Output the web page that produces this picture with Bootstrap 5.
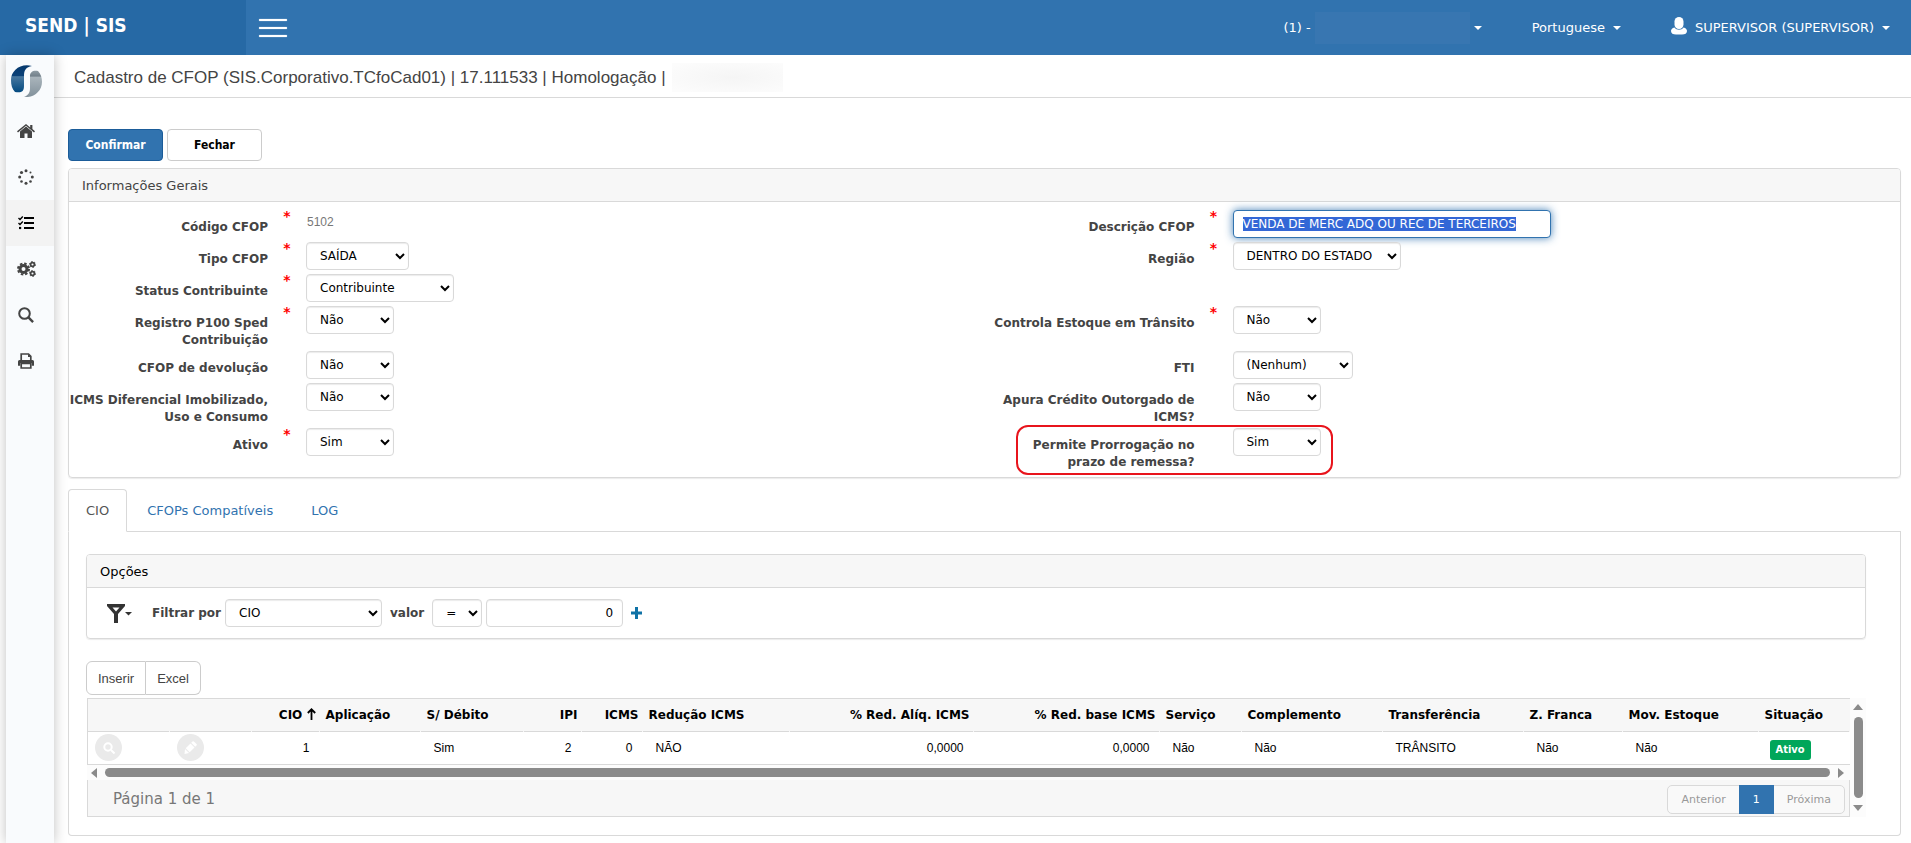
<!DOCTYPE html>
<html lang="pt-BR">
<head>
<meta charset="utf-8">
<meta name="viewport" content="width=device-width, initial-scale=1">
<title>SEND | SIS - Cadastro de CFOP</title>
<link href="https://cdn.jsdelivr.net/npm/bootstrap@5.3.0/dist/css/bootstrap.min.css" rel="stylesheet">
<style>
:root { --sis-blue: #3173af; --sis-brand: #2669a5; --sis-line: #d9d9d9; --sis-soft: #f7f7f7; }
body { font-family: "DejaVu Sans", Verdana, sans-serif; font-size: 12px; line-height: 17px; color: #444; background: #fff; }
.condensed { font-family: "DejaVu Sans Condensed", Tahoma, sans-serif; }
.arial { font-family: "Liberation Sans", Arial, sans-serif; }

/* top bar */
.topbar { background: var(--sis-blue); height: 55px; }
.brand { background: var(--sis-brand); width: 246px; padding-left: 25px; font-size: 19px; font-weight: 700; color: #fff; }
.burger { border: 0; background: none; padding: 0; margin-left: 13px; width: 28px; }
.burger span { display: block; height: 2px; background: #fff; margin: 5px 0; border-radius: 1px; box-shadow: 0 0 1px #fff; }
.burger span + span { margin-top: 6px; }
.topmenu { gap: 50px; padding-right: 21px; font-size: 13px; }
.topmenu a { color: #fff; text-decoration: none; }
.caret { width: 0; height: 0; border: 4px solid transparent; border-top-color: currentColor; border-bottom: 0; }
.redacted-top { width: 155px; height: 32px; background: #3876b1; }
.redacted { width: 111px; height: 29px; margin-left: 6px; background: radial-gradient(ellipse at 55% 50%, #f5f5f5, #fcfcfc 90%); }

/* side bar */
.sidebar { width: 48px; margin-left: 6px; background: #f9fbfd; box-shadow: 0 0 12px rgba(0, 0, 0, .25); z-index: 2; }
.sidebar .logo { height: 53px; padding-top: 10px; }
.sidebar a { height: 46px; padding-right: 8px; color: #444; }
.sidebar a.active { background: #f3f3f3; color: #000; }

main { min-width: 0; }
.titlebar { height: 43px; border-bottom: 1px solid var(--sis-line); padding: 2px 0 0 20px; font-size: 17px; }
.content { padding: 31px 10px 6px 14px; }
.btn-main, .btn-plain { width: 95px; height: 32px; font-size: 12px; line-height: 17px; font-weight: 700; border-radius: 4px; padding: 0; }
.btn-main { background: var(--sis-blue); border-color: #1b5c99; color: #fff; }
.btn-plain { background: #fff; border-color: #ccc; color: #000; }

/* panels */
.panel { border: 1px solid var(--sis-line); border-radius: 4px; box-shadow: 0 1px 1px rgba(0, 0, 0, .08); }
.panel-general { margin-top: 7px; }
.panel-head { background: var(--sis-soft); border-bottom: 1px solid var(--sis-line); height: 33px; padding-left: 13px; font-size: 13px; border-radius: 3px 3px 0 0; }
.fields { grid-template-columns: 1fr 1fr; column-gap: 22px; padding: 8px 0 4px; }
.field { display: grid; grid-template-columns: 199px 38px auto; justify-content: start; align-items: start; padding-bottom: 4px; position: relative; }
.field > label { padding-top: 9px; margin: 0 0 -2px -4px; text-align: right; font-weight: 700; }
.req { color: #f00; text-align: center; font-size: 14px; line-height: 12px; font-weight: 700; }
.field .control { grid-column: 3; }
.control { height: 28px; border: 1px solid var(--sis-line); border-radius: 4px; background: #fff; color: #000; font-size: 12px; box-shadow: inset 0 1px 1px rgba(0, 0, 0, .08); }
select.control { padding: 0 0 0 9px; }
input.control { padding: 0 9px; }
input.control:focus { outline: 0; border-color: var(--sis-blue); box-shadow: 0 0 8px rgba(49, 115, 175, .9); }
input.control::selection { background: #3367d6; color: #fff; }
.readonly { color: #777; padding: 4px 0 0 1px; }
.w-yes { width: 88px; }
.w-type { width: 103px; }
.w-status { width: 148px; }
.w-region { width: 168px; }
.w-fti { width: 120px; }
.w-desc { width: 318px; }
.w-filter { width: 157px; }
.w-op { width: 50px; }
.w-value { width: 137px; }
.highlight { position: absolute; left: 20px; top: -3px; width: 317px; height: 50px; border: 2px solid #e8141c; border-radius: 12px; pointer-events: none; }

/* tabs */
.tabs { margin-top: 11px; gap: 2px; border-bottom: 1px solid var(--sis-line); font-size: 13px; }
.tabs .nav-link { color: var(--sis-blue); border-radius: 4px 4px 0 0; padding: 12px 17px 11px; line-height: 18px; }
.tabs .nav-link.active { color: #555; border-color: var(--sis-line) var(--sis-line) #fff; }
.tabpane { border: 1px solid var(--sis-line); border-top: 0; border-radius: 0 0 4px 4px; padding: 22px 34px 18px 17px; }
.filter { padding: 11px 20px; font-weight: 700; }
.filter .control { font-weight: 400; }
.actions { margin: 22px 0 3px; }
.small-btn { border: 1px solid #ccc; background: #fff; color: #444; height: 34px; font-size: 13px; line-height: 17px; padding: 0 11px; }

/* grid */
.datagrid { margin-left: 1px; }
.gridbody { min-width: 0; }
.datagrid table { table-layout: fixed; width: 100%; border-top: 1px solid var(--sis-line); border-left: 1px solid var(--sis-line); color: #000; white-space: nowrap; }
.datagrid th { height: 33px; padding: 1px 4px 0 6px; vertical-align: middle; font-weight: 700; border: 0; background: linear-gradient(var(--sis-line), var(--sis-line)) 0 100% / calc(100% - 1px) 1px no-repeat var(--sis-soft); }
.datagrid td { height: 33px; padding: 2px 10px 0 13px; vertical-align: middle; border: 0; border-bottom: 1px solid var(--sis-line); }
.datagrid td.tool { padding: 0 0 0 7px; }
.round { width: 27px; height: 27px; border: 0; border-radius: 50%; background: #eaeaea; padding: 0; display: flex; align-items: center; justify-content: center; }
.datagrid td.state { padding: 4px 0 0 11px; }
.tag { background: #00a65a; color: #fff; font-weight: 700; border-radius: 3px; padding: 2px 6px 3px; line-height: 15px; display: inline-block; font-size: 11px; vertical-align: middle; }
.hbar { height: 15px; background: #fcfcfc; gap: 8px; padding: 0 6px 0 4px; }
.vbar { width: 16px; background: #fcfcfc; gap: 7px; padding: 6px 0; }
.thumb { background: #8b8b8b; border-radius: 5px; }
.hbar .thumb { height: 9px; }
.vbar .thumb { width: 9px; }
.gridfoot { height: 37px; background: var(--sis-soft); border: 1px solid var(--sis-line); border-top: 0; padding: 3px 4px 0 25px; font-size: 15px; color: #777; }
.pager .page-link { font-size: 11px; line-height: 15px; height: 29px; padding: 6px 13px; background: #f9f9f9; border-color: var(--sis-line); color: #999; }
.pager .page-item:first-child .page-link { border-radius: 5px 0 0 5px; }
.pager .page-item:last-child .page-link { border-radius: 0 5px 5px 0; }
.pager .active .page-link { background: var(--sis-blue); border-color: var(--sis-blue); color: #fff; }
</style>
</head>
<body class="d-flex flex-column min-vh-100">

<header class="topbar d-flex align-items-stretch">
  <div class="brand condensed d-flex align-items-center pb-1">SEND | SIS</div>
  <button class="burger align-self-center" type="button" aria-label="Menu"><span></span><span></span><span></span></button>
  <nav class="topmenu d-flex align-items-center ms-auto">
    <a href="#" class="d-flex align-items-center">(1) -<span class="redacted-top mx-1"></span><span class="caret"></span></a>
    <a href="#" class="d-flex align-items-center gap-2">Portuguese<span class="caret"></span></a>
    <a href="#" class="d-flex align-items-center gap-2">
      <svg width="16" height="18" viewBox="0 0 16 18" fill="#fff" class="mb-1"><rect x="3.500" y="0" width="9" height="12" rx="4.500"/><path d="M3.500 10.500C1 11 0 12.500 0 14c0 2.500 2 3.500 5 3.500h6c3 0 5-1 5-3.500 0-1.500-1-3-3.500-3.500-2 3-7 3-9 0z"/></svg>
      SUPERVISOR (SUPERVISOR)<span class="caret"></span>
    </a>
  </nav>
</header>

<div class="d-flex flex-fill">
  <aside class="sidebar flex-shrink-0">
    <div class="logo ps-1">
      <svg width="32" height="32" viewBox="0 0 32 32">
        <defs>
          <linearGradient id="blue" x1="0" y1="0" x2="0" y2="1"><stop offset="0" stop-color="#06396d"/><stop offset=".38" stop-color="#0a4178"/><stop offset=".42" stop-color="#47779f"/><stop offset="1" stop-color="#034a80"/></linearGradient>
          <linearGradient id="gray" x1="0" y1="0" x2="0" y2="1"><stop offset="0" stop-color="#8e9ba3"/><stop offset=".2" stop-color="#73818b"/><stop offset=".25" stop-color="#a9b4bb"/><stop offset="1" stop-color="#82919b"/></linearGradient>
        </defs>
        <path fill="url(#blue)" d="M22 1C10-2 1 6 1 15c0 5 1 9 4 12 6 1 9 0 9-6V11c0-6 2-9 8-10z"/>
        <path fill="url(#gray)" d="M28 6c3 3 4 7 4 11 0 9-8 16-18 15 5-2 6-5 6-9V11c0-4 3-6 8-5z"/>
      </svg>
    </div>
    <a href="#" class="d-flex align-items-center justify-content-center" aria-label="Início">
      <svg width="18" height="14" viewBox="0 0 18 14" fill="currentColor"><path d="M9 2.600 3 7.600V13.500q0 .5.5.5H7.500V9.500h3V14h4q.5 0 .5-.5V7.600z"/><path d="M9 0 0 7.300 1 8.400l8-6.600 8 6.600 1-1.100-2.600-2.200V.9h-2.200v2.500z"/></svg>
    </a>
    <a href="#" class="d-flex align-items-center justify-content-center" aria-label="Processos">
      <svg width="16" height="16" viewBox="0 0 16 16" fill="currentColor"><circle cx="8" cy="1.700" r="1.500"/><circle cx="8" cy="14.300" r="1.500"/><circle cx="1.700" cy="8" r="1.500"/><circle cx="14.300" cy="8" r="1.500"/><circle cx="3.500" cy="3.500" r="1.600"/><circle cx="12.500" cy="12.500" r="1.300"/><circle cx="3.500" cy="12.500" r="1.300"/><circle cx="12.500" cy="3.500" r="1"/></svg>
    </a>
    <a href="#" class="active d-flex align-items-center justify-content-center" aria-label="Cadastros">
      <svg width="16" height="14" viewBox="0 0 16 14" fill="none" stroke="currentColor"><path stroke-width="2" d="M6 2h10M6 7h10M6 12h10"/><path stroke-width="1.400" d="M.5 2 2 3.400 4.800.5M.5 7 2 8.400l2.800-2.900"/><path stroke-width="2.200" d="M1 12h2.200"/></svg>
    </a>
    <a href="#" class="d-flex align-items-center justify-content-center" aria-label="Configurações">
      <svg width="19" height="16" viewBox="0 0 19 16" fill="none" stroke="currentColor"><circle cx="6.500" cy="8" r="3.500" stroke-width="3"/><circle cx="6.500" cy="8" r="5.500" stroke-width="2" stroke-dasharray="2.500 1.820"/><circle cx="15.500" cy="3.500" r="1.900" stroke-width="1.700"/><circle cx="15.500" cy="3.500" r="3" stroke-width="1" stroke-dasharray="1.500 1.600"/><circle cx="15.500" cy="12.500" r="1.900" stroke-width="1.700"/><circle cx="15.500" cy="12.500" r="3" stroke-width="1" stroke-dasharray="1.500 1.600"/></svg>
    </a>
    <a href="#" class="d-flex align-items-center justify-content-center" aria-label="Pesquisar">
      <svg width="16" height="16" viewBox="0 0 16 16" fill="none" stroke="currentColor" stroke-width="2"><circle cx="6.500" cy="6.500" r="5.300"/><path stroke-width="2.400" d="m10.400 10.400 4.700 4.700"/></svg>
    </a>
    <a href="#" class="d-flex align-items-center justify-content-center" aria-label="Imprimir">
      <svg width="16" height="16" viewBox="0 0 16 16"><path fill="none" stroke="currentColor" stroke-width="1.700" d="M3.200 8V1h7.300l2.300 2.300V8"/><path fill="currentColor" d="M10 1v3h3zM1.500 7h13q1.500 0 1.500 1.500v4.200h-2.300V10H2.300v2.700H0V8.500Q0 7 1.500 7z"/><path fill="none" stroke="currentColor" stroke-width="1.700" d="M3.200 10.500h9.600V15H3.200z"/></svg>
    </a>
  </aside>

  <main class="flex-fill">
    <div class="titlebar arial d-flex align-items-center">
      <span>Cadastro de CFOP (SIS.Corporativo.TCfoCad01) | 17.111533 | Homologação |</span>
      <span class="redacted"></span>
    </div>

    <div class="content">
      <div class="d-flex gap-1 condensed">
        <button type="button" class="btn btn-main">Confirmar</button>
        <button type="button" class="btn btn-plain">Fechar</button>
      </div>

      <section class="panel panel-general">
        <div class="panel-head d-flex align-items-center">Informações Gerais</div>
        <form class="fields d-grid">
          <div class="field"><label for="codigo">Código CFOP</label><span class="req">*</span><output id="codigo" class="readonly arial">5102</output></div>
          <div class="field"><label for="descricao">Descrição CFOP</label><span class="req">*</span><input id="descricao" type="text" class="control w-desc" value="VENDA DE MERC ADQ OU REC DE TERCEIROS"></div>

          <div class="field"><label for="tipo">Tipo CFOP</label><span class="req">*</span><select id="tipo" class="control w-type"><option>SAÍDA</option></select></div>
          <div class="field"><label for="regiao">Região</label><span class="req">*</span><select id="regiao" class="control w-region"><option>DENTRO DO ESTADO</option></select></div>

          <div class="field"><label for="status">Status Contribuinte</label><span class="req">*</span><select id="status" class="control w-status"><option>Contribuinte</option></select></div>
          <div></div>

          <div class="field"><label for="p100">Registro P100 Sped Contribuição</label><span class="req">*</span><select id="p100" class="control w-yes"><option>Não</option></select></div>
          <div class="field"><label for="estoque">Controla Estoque em Trânsito</label><span class="req">*</span><select id="estoque" class="control w-yes"><option>Não</option></select></div>

          <div class="field"><label for="devolucao">CFOP de devolução</label><select id="devolucao" class="control w-yes"><option>Não</option></select></div>
          <div class="field"><label for="fti">FTI</label><select id="fti" class="control w-fti"><option>(Nenhum)</option></select></div>

          <div class="field"><label for="difal">ICMS Diferencial Imobilizado, Uso e Consumo</label><select id="difal" class="control w-yes"><option>Não</option></select></div>
          <div class="field"><label for="apura">Apura Crédito Outorgado de ICMS?</label><select id="apura" class="control w-yes"><option>Não</option></select></div>

          <div class="field"><label for="ativo">Ativo</label><span class="req">*</span><select id="ativo" class="control w-yes"><option>Sim</option></select></div>
          <div class="field"><label for="prazo">Permite Prorrogação no prazo de remessa?</label><select id="prazo" class="control w-yes"><option>Sim</option></select><div class="highlight"></div></div>
        </form>
      </section>

      <ul class="nav nav-tabs tabs">
        <li class="nav-item"><a class="nav-link active" href="#">CIO</a></li>
        <li class="nav-item"><a class="nav-link" href="#">CFOPs Compatíveis</a></li>
        <li class="nav-item"><a class="nav-link" href="#">LOG</a></li>
      </ul>

      <div class="tabpane">
        <section class="panel">
          <div class="panel-head d-flex align-items-center text-black">Opções</div>
          <div class="filter d-flex align-items-center">
            <button type="button" class="btn p-0 border-0 d-flex align-items-center me-3" aria-label="Filtro">
              <svg width="25" height="19" viewBox="0 0 25 19"><path fill="#333" fill-rule="evenodd" d="M0 0h18v2l-7 8v9H7v-9L0 2zM5.500 3.500 9 7.500l3.500-4z"/><path fill="#333" d="M18 8h7l-3.500 3.500z"/></svg>
            </button>
            <label for="filtro" class="mx-1">Filtrar por</label>
            <select id="filtro" class="control w-filter"><option>CIO</option></select>
            <label for="valor" class="mx-2">valor</label>
            <select class="control w-op" aria-label="Operador"><option>=</option></select>
            <input id="valor" type="text" class="control w-value text-end ms-1 me-2" value="0">
            <button type="button" class="btn p-0 border-0 d-flex" aria-label="Adicionar">
              <svg width="11" height="12" viewBox="0 0 11 12"><path stroke="#0f72a6" stroke-width="3" d="M5.500 0v12M0 6h11"/></svg>
            </button>
          </div>
        </section>

        <div class="actions d-flex arial">
          <button type="button" class="small-btn rounded-start">Inserir</button>
          <button type="button" class="small-btn rounded-end border-start-0">Excel</button>
        </div>

        <div class="datagrid d-flex">
          <div class="gridbody flex-fill">
            <table>
              <colgroup><col style="width:82px"><col style="width:82px"><col style="width:68px"><col style="width:101px"><col style="width:103px"><col style="width:58px"><col style="width:61px"><col style="width:147px"><col style="width:184px"><col style="width:186px"><col style="width:82px"><col style="width:141px"><col style="width:141px"><col style="width:99px"><col style="width:136px"><col></colgroup>
              <thead>
                <tr>
                  <th></th><th></th>
                  <th class="text-end">CIO <svg width="9" height="12" viewBox="0 0 9 12" class="mb-1" fill="none" stroke="#000" stroke-width="1.800"><path d="M4.500 12V1.500M.8 5l3.700-3.700L8.200 5"/></svg></th>
                  <th>Aplicação</th><th>S/ Débito</th><th class="text-end">IPI</th><th class="text-end">ICMS</th><th>Redução ICMS</th><th class="text-end">% Red. Alíq. ICMS</th><th class="text-end">% Red. base ICMS</th><th>Serviço</th><th>Complemento</th><th>Transferência</th><th>Z. Franca</th><th>Mov. Estoque</th><th>Situação</th>
                </tr>
              </thead>
              <tbody class="arial">
                <tr>
                  <td class="tool"><button type="button" class="round" aria-label="Consultar"><svg width="12" height="12" viewBox="0 0 12 12" fill="none" stroke="#fff" stroke-width="2"><circle cx="5" cy="5" r="3.700"/><path d="m8 8 3.500 3.500"/></svg></button></td>
                  <td class="tool"><button type="button" class="round" aria-label="Editar"><svg width="13" height="13" viewBox="0 0 13 13" fill="#fff"><path d="m1 8 4 4-4.500 1zM1.700 7.300 6.500 2.500l4 4-4.800 4.800zM7.200 1.800 8.500.5q.7-.7 1.400 0l2.600 2.600q.7.700 0 1.400l-1.300 1.300z"/></svg></button></td>
                  <td class="text-end">1</td><td></td><td>Sim</td><td class="text-end">2</td><td class="text-end">0</td><td>NÃO</td><td class="text-end">0,0000</td><td class="text-end">0,0000</td><td>Não</td><td>Não</td><td>TRÂNSITO</td><td>Não</td><td>Não</td>
                  <td class="state"><span class="tag condensed">Ativo</span></td>
                </tr>
              </tbody>
            </table>
            <div class="hbar d-flex align-items-center">
              <svg width="6" height="10" viewBox="0 0 6 10"><path fill="#8b8b8b" d="M6 0v10L0 5z"/></svg>
              <div class="thumb flex-fill"></div>
              <svg width="6" height="10" viewBox="0 0 6 10"><path fill="#8b8b8b" d="M0 0v10l6-5z"/></svg>
            </div>
            <div class="gridfoot d-flex align-items-center justify-content-between">
              <span>Página 1 de 1</span>
              <ul class="pagination pager mb-0">
                <li class="page-item"><a class="page-link" href="#">Anterior</a></li>
                <li class="page-item active"><a class="page-link" href="#">1</a></li>
                <li class="page-item"><a class="page-link" href="#">Próxima</a></li>
              </ul>
            </div>
          </div>
          <div class="vbar flex-shrink-0 d-flex flex-column align-items-center">
            <svg width="10" height="6" viewBox="0 0 10 6"><path fill="#8b8b8b" d="M0 6h10L5 0z"/></svg>
            <div class="thumb flex-fill"></div>
            <svg width="10" height="6" viewBox="0 0 10 6"><path fill="#8b8b8b" d="M0 0h10L5 6z"/></svg>
          </div>
        </div>
      </div>
    </div>
  </main>
</div>

<script src="https://cdn.jsdelivr.net/npm/bootstrap@5.3.0/dist/js/bootstrap.bundle.min.js"></script>
<script>
const descricao = document.getElementById('descricao');
descricao.focus();
descricao.select();
</script>
</body>
</html>
